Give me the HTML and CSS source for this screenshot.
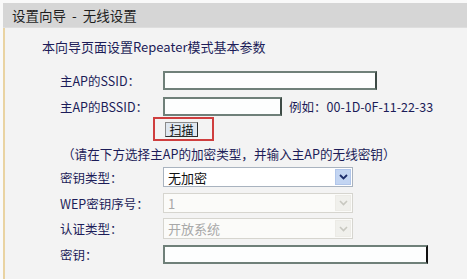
FILE: index.html
```html
<!DOCTYPE html>
<html>
<head>
<meta charset="utf-8">
<link rel="stylesheet" href="styles.css">
</head>
<body>
<div class="page">
  <div class="header">设置向导&nbsp; - &nbsp;无线设置</div>
  <div class="content">
    <div class="intro">本向导页面设置Repeater模式基本参数</div>
    <div class="form">
      <div class="row r1">
        <div class="label">主AP的SSID：</div>
        <div class="input w-ssid"></div>
      </div>
      <div class="row r2">
        <div class="label">主AP的BSSID：</div>
        <div class="input w-bssid"></div>
        <div class="hint">例如：00-1D-0F-11-22-33</div>
      </div>
      <div class="row r-btn">
        <div class="label"></div>
        <div class="btn-cell">
          <span class="mark"></span>
          <button class="btn">扫描</button>
        </div>
      </div>
      <div class="note">（请在下方选择主AP的加密类型，并输入主AP的无线密钥）</div>
      <div class="row r-sel">
        <div class="label">密钥类型：</div>
        <div class="select">
          <span class="sel-text">无加密</span>
          <span class="chev"><svg width="9" height="6" viewBox="0 0 9 6"><path d="M1 1 L4.5 4.5 L8 1" fill="none" stroke="#1d2d6a" stroke-width="1.8"/></svg></span>
        </div>
      </div>
      <div class="row r-sel">
        <div class="label">WEP密钥序号：</div>
        <div class="select disabled">
          <span class="sel-text">1</span>
          <span class="chev"><svg width="9" height="6" viewBox="0 0 9 6"><path d="M1 1 L4.5 4.5 L8 1" fill="none" stroke="#c8c8c0" stroke-width="1.6"/></svg></span>
        </div>
      </div>
      <div class="row r-sel3">
        <div class="label">认证类型：</div>
        <div class="select disabled">
          <span class="sel-text">开放系统</span>
          <span class="chev"><svg width="9" height="6" viewBox="0 0 9 6"><path d="M1 1 L4.5 4.5 L8 1" fill="none" stroke="#c8c8c0" stroke-width="1.6"/></svg></span>
        </div>
      </div>
      <div class="row r-key">
        <div class="label">密钥：</div>
        <div class="input w-key"></div>
      </div>
    </div>
  </div>
</div>
</body>
</html>
```
FILE: styles.css
```css
html, body {
  margin: 0;
  padding: 0;
  background: #f9f9f9;
}
body {
  width: 467px;
  height: 279px;
  overflow: hidden;
  font-family: "Noto Sans CJK SC", "Noto Sans", sans-serif;
  font-size: 13px;
}
.page {
  padding-top: 3px;
  padding-left: 3px;
  height: 276px;
  display: flex;
  flex-direction: column;
}
.header {
  flex: none;
  height: 24px;
  line-height: 24px;
  background: #d6d6d6;
  border-bottom: 1px solid #dedede;
  color: #1e1e1e;
  padding-left: 9px;
  font-size: 13.5px;
}
.content {
  flex: 1;
  background: #f3f3f3;
  border-left: 2px solid #e9d3a2;
  padding-top: 11px;
}
.intro {
  margin-left: 37px;
  height: 16px;
  line-height: 16px;
  color: #1c1c58;
}
.form {
  margin-top: 15px;
  margin-left: 55px;
}
.row {
  display: flex;
  align-items: center;
  height: 20px;
}
.r2 { margin-top: 6px; }
.r-btn { margin-top: 1px; height: 24px; }
.r-sel { margin-top: 6px; }
.r-sel3 { margin-top: 5px; height: 21px; }
.r-key { margin-top: 5px; }
.label {
  width: 103px;
  flex: none;
  color: #1c1c58;
  font-size: 12.5px;
}
.input {
  height: 15px;
  background: #fdfefe;
  border: 2px solid #6f8079;
  border-right-color: #3d4a45;
}
.w-ssid { width: 210px; }
.w-bssid { width: 115px; }
.w-key { width: 261px; border-right-color: #111; }
.hint {
  margin-left: 7px;
  color: #1c1c58;
  font-size: 12.5px;
}
.btn-cell {
  position: relative;
  height: 24px;
  display: flex;
  align-items: center;
}
.btn {
  margin-left: 2px;
  height: 15px;
  width: 33px;
  padding: 0;
  font-family: "Noto Sans CJK SC", sans-serif;
  font-size: 12px;
  line-height: 13px;
  color: #111;
  background: #dfe7ef;
  border: 1px solid #2b2b2b;
  border-top-color: #8a8a8a;
  border-left-color: #8a8a8a;
}
.mark {
  position: absolute;
  left: -10px;
  top: 0;
  width: 57px;
  height: 20px;
  border: 2px solid #cf3e3e;
}
.note {
  margin-top: 6px;
  margin-left: 2px;
  height: 14px;
  line-height: 14px;
  color: #1c1c58;
  font-size: 12.6px;
}
.select {
  box-sizing: border-box;
  width: 190px;
  height: 100%;
  background: #fff;
  border: 1px solid #a9b3bf;
  display: flex;
  align-items: center;
  justify-content: space-between;
  padding-left: 4px;
  padding-right: 1px;
  color: #111;
}
.sel-text { font-size: 13px; }
.chev {
  width: 16px;
  height: calc(100% - 2px);
  background: #c3d5f2;
  border: 1px solid #b1c6ea;
  box-sizing: border-box;
  display: flex;
  align-items: center;
  justify-content: center;
}
.select.disabled {
  background: #fbfbf9;
  border-color: #d6d5cf;
  color: #a8a8a8;
}
.select.disabled .chev {
  background: #f0f0ec;
  border-color: #ecebe6;
}
```
